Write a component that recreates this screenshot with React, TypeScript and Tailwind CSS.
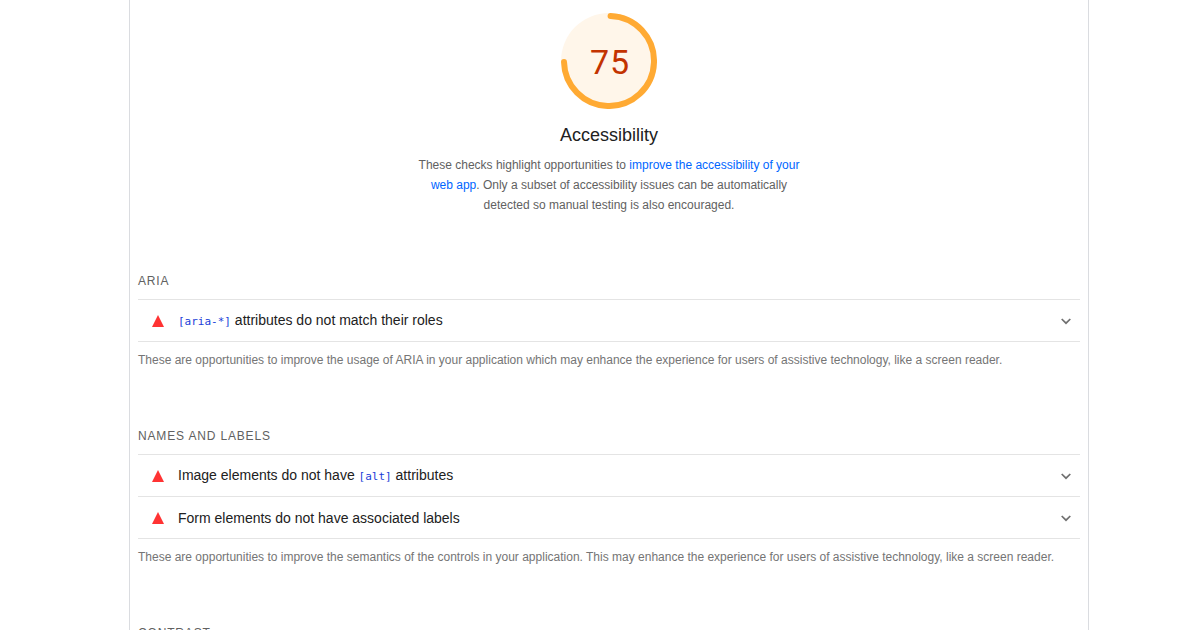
import { ReactNode, useState } from "react";

const SANS = "font-['Liberation_Sans',Arial,sans-serif]";

function Gauge({ score }: { score: number }) {
  const radius = 45;
  const length = 2 * Math.PI * radius;
  return (
    <div className="grid size-24 place-items-center">
      <svg viewBox="0 0 96 96" className="col-start-1 row-start-1 size-24" aria-hidden="true">
        <circle cx="48" cy="48" r="48" fill="#fff6ea" />
        <circle
          cx="48"
          cy="48"
          r={radius}
          fill="none"
          stroke="#ffaa33"
          strokeWidth="6"
          strokeLinecap="round"
          strokeDasharray={`${(length * score) / 100 - 3} ${length}`}
          transform="rotate(-88 48 48)"
        />
      </svg>
      <span className="col-start-1 row-start-1 mt-0.5 ml-0.5 font-['Roboto',sans-serif] text-[34px] leading-10 font-normal tracking-[1px] text-[#c33300]">
        {score}
      </span>
    </div>
  );
}

function Code({ children }: { children: ReactNode }) {
  return (
    <code className="font-['DejaVu_Sans_Mono',monospace] text-[11px] text-[#1a40d8]">{children}</code>
  );
}

function Audit({ children }: { children: ReactNode }) {
  const [open, setOpen] = useState(false);
  return (
    <li className="border-t border-[#e4e4e4]">
      <button
        type="button"
        aria-expanded={open}
        onClick={() => setOpen(!open)}
        className="flex h-[41px] w-full items-center pr-2 pl-3.5 text-left text-sm text-[#212121]"
      >
        <svg viewBox="0 0 12 12" className="mr-3.5 size-3 shrink-0" aria-hidden="true">
          <path d="M6 0 12 12H0Z" fill="#ff3333" />
        </svg>
        <span className="grow leading-5">{children}</span>
        <svg
          viewBox="0 0 12 12"
          className="size-3 shrink-0"
          fill="none"
          stroke="#707070"
          strokeWidth="1.7"
          aria-hidden="true"
        >
          <path d="M1.7 4 6 8.2 10.3 4" />
        </svg>
      </button>
    </li>
  );
}

function Group({ title, audits, note }: { title: string; audits: ReactNode[]; note: string }) {
  return (
    <section className="mb-14">
      <h2 className="mb-2 text-xs leading-5 tracking-[0.07em] text-[#616161] uppercase">{title}</h2>
      <ul className="border-b border-[#e4e4e4]">
        {audits.map((audit, i) => (
          <Audit key={i}>{audit}</Audit>
        ))}
      </ul>
      <p className="mt-2 text-xs leading-5 text-[#757575]">{note}</p>
    </section>
  );
}

export default function App() {
  return (
    <div className={`h-screen overflow-hidden bg-white pl-[18px] ${SANS}`}>
      <main className="mx-auto min-h-full max-w-[960px] border-x border-[#dadce0] px-2 pt-[13px]">
        <header className="mb-14 flex flex-col items-center text-center">
          <Gauge score={75} />
          <h1 className="mt-3.5 text-lg leading-6 text-[#212121]">Accessibility</h1>
          <p className="mt-2 max-w-[400px] text-xs leading-5 text-[#616161]">
            These checks highlight opportunities to{" "}
            <a href="#accessibility" className="text-[#0066ff]">
              improve the accessibility of your web app
            </a>
            . Only a subset of accessibility issues can be automatically detected so manual testing is
            also encouraged.
          </p>
        </header>
        <Group
          title="ARIA"
          audits={[
            <>
              <Code>[aria-*]</Code> attributes do not match their roles
            </>,
          ]}
          note="These are opportunities to improve the usage of ARIA in your application which may enhance the experience for users of assistive technology, like a screen reader."
        />
        <Group
          title="Names and labels"
          audits={[
            <>
              Image elements do not have <Code>[alt]</Code> attributes
            </>,
            <>Form elements do not have associated labels</>,
          ]}
          note="These are opportunities to improve the semantics of the controls in your application. This may enhance the experience for users of assistive technology, like a screen reader."
        />
        <h2 className="text-xs leading-5 tracking-[0.07em] text-[#616161] uppercase">Contrast</h2>
      </main>
    </div>
  );
}
